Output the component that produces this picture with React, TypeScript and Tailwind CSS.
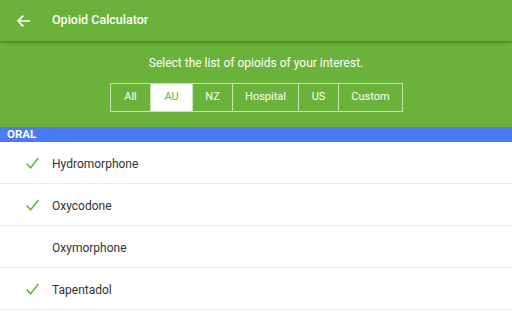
import React from 'react';

const tabs = [
  { label: 'All', w: 'w-[39px]' },
  { label: 'AU', w: 'w-[42px]', active: true },
  { label: 'NZ', w: 'w-[40px]' },
  { label: 'Hospital', w: 'w-[66px]' },
  { label: 'US', w: 'w-[40px]' },
  { label: 'Custom', w: 'w-[64px]' },
];

const drugs = [
  { name: 'Hydromorphone', checked: true },
  { name: 'Oxycodone', checked: true },
  { name: 'Oxymorphone', checked: false },
  { name: 'Tapentadol', checked: true },
];

function Check() {
  return (
    <svg width="13" height="13" viewBox="0 0 24 24" fill="none">
      <path d="M2 13l6.5 7L22 3" stroke="#6ab23a" strokeWidth="2.8" strokeLinecap="square" />
    </svg>
  );
}

export default function App() {
  return (
    <div className="w-[512px] h-[321px] overflow-hidden bg-white" style={{ fontFamily: 'Roboto, "Noto Sans", sans-serif' }}>
      {/* Header */}
      <div className="relative z-10 h-[41px] bg-[#6ab23a] flex items-center shadow-[0_2px_3px_rgba(0,0,0,0.25)]">
        <div className="w-[52px] flex items-center pl-[16px]">
          <svg width="16" height="16" viewBox="0 0 24 24" fill="none">
            <path d="M21 12H4M11 4l-8 8 8 8" stroke="white" strokeWidth="2.6" />
          </svg>
        </div>
        <span className="text-white text-[12.5px] font-medium">Opioid Calculator</span>
      </div>

      {/* Filter area */}
      <div className="h-[86px] bg-[#6ab23a] flex flex-col items-center pt-[14px]">
        <p className="text-white text-[12px] leading-[16px]">Select the list of opioids of your interest.</p>
        <div className="flex mt-[12px] border border-[#c8e3b5] h-[29px] ml-[1px]">
          {tabs.map((t, i) => (
            <div
              key={t.label}
              className={`${t.w} flex items-center justify-center text-[11px] ${i > 0 ? 'border-l border-[#c8e3b5]' : ''} ${
                t.active ? 'bg-white text-[#6ab23a]' : 'text-white'
              }`}
            >
              {t.label}
            </div>
          ))}
        </div>
      </div>

      {/* Section */}
      <div className="h-[15px] bg-[#4a7bf5] flex items-center pl-[7px]">
        <span className="text-white text-[11.5px] font-bold leading-none">ORAL</span>
      </div>

      {drugs.map((d) => (
        <div key={d.name} className="h-[42px] flex items-center pt-[2px] border-b border-[#ebebeb]">
          <div className="w-[52px] flex pl-[26px]">{d.checked && <Check />}</div>
          <span className="text-[12px] text-[#333333]">{d.name}</span>
        </div>
      ))}
    </div>
  );
}
